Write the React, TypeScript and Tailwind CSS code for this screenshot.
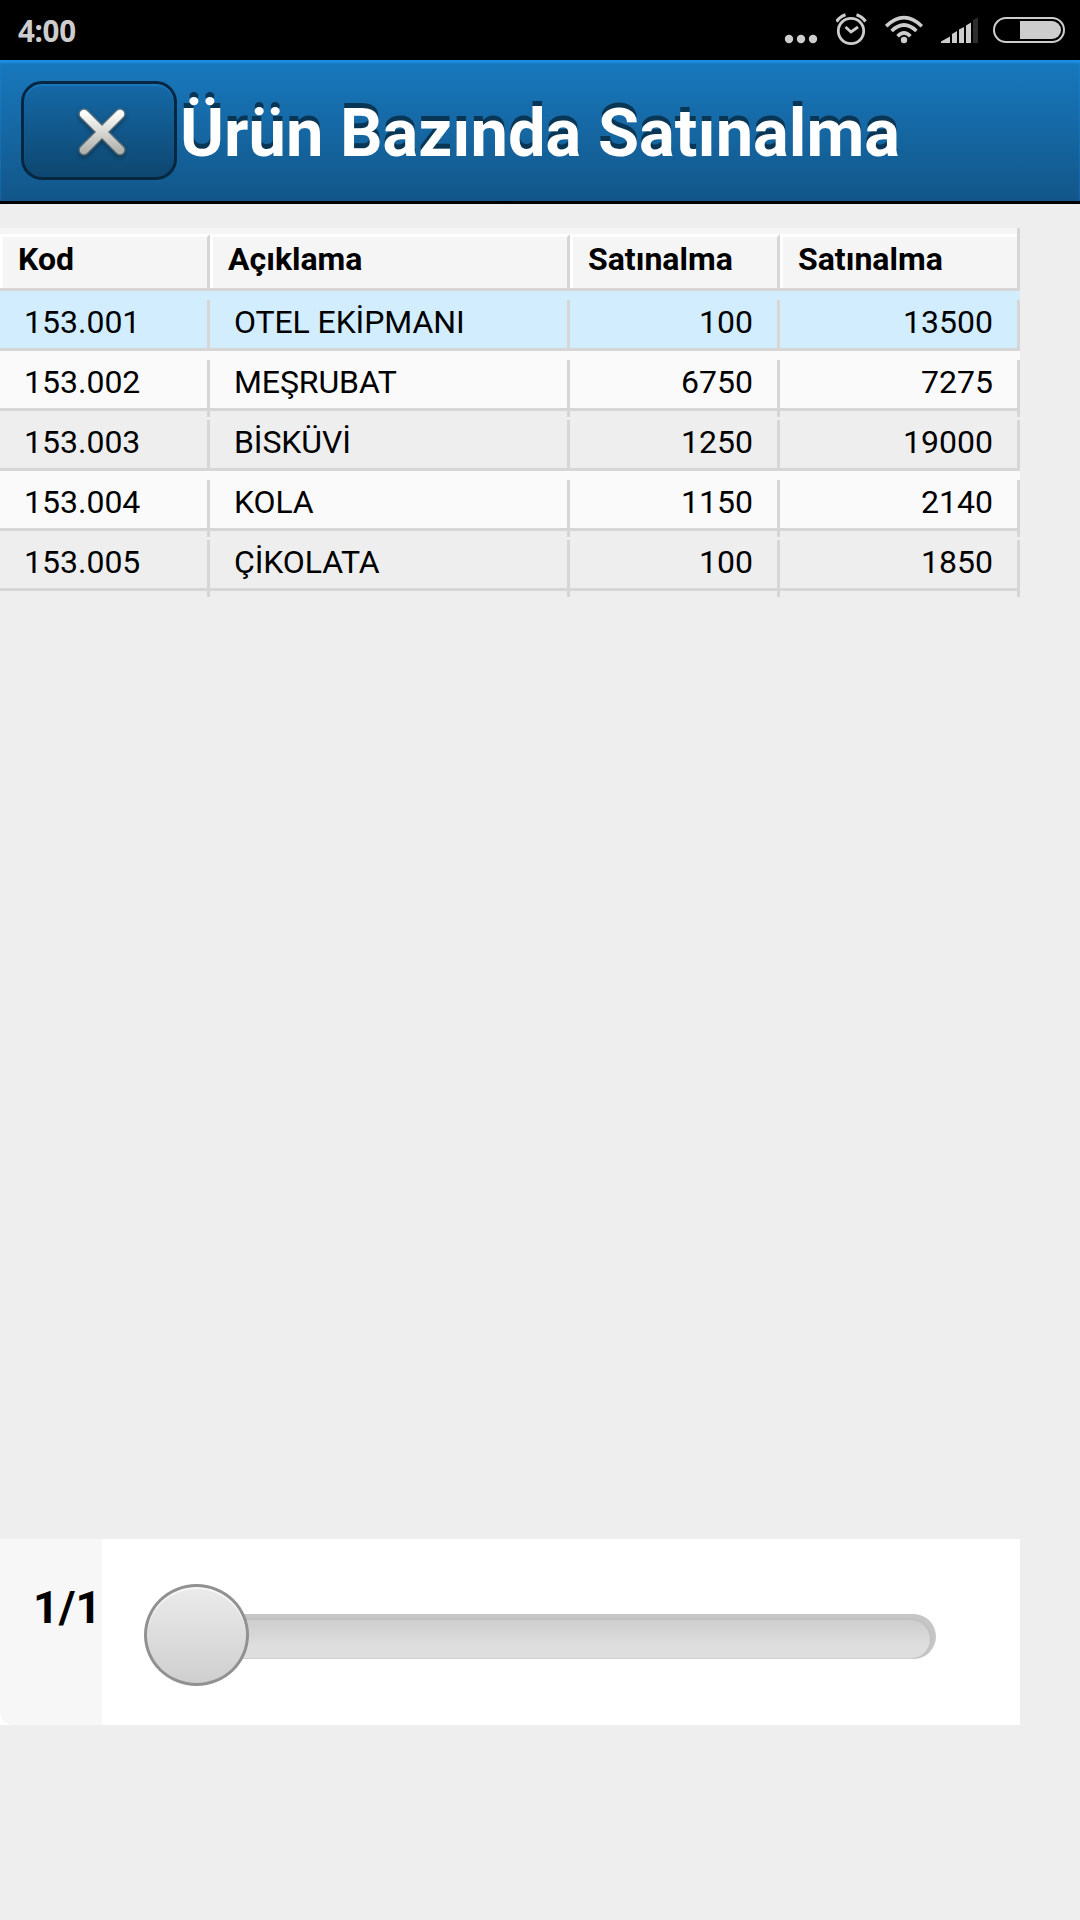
import clsx from "clsx";

type Row = {
  code: string;
  description: string;
  quantity: number;
  total: number;
};

const rows: Row[] = [
  { code: "153.001", description: "OTEL EKİPMANI", quantity: 100, total: 13500 },
  { code: "153.002", description: "MEŞRUBAT", quantity: 6750, total: 7275 },
  { code: "153.003", description: "BİSKÜVİ", quantity: 1250, total: 19000 },
  { code: "153.004", description: "KOLA", quantity: 1150, total: 2140 },
  { code: "153.005", description: "ÇİKOLATA", quantity: 100, total: 1850 },
];

const headers = ["Kod", "Açıklama", "Satınalma", "Satınalma"];

const columns = "grid grid-cols-[210px_360px_210px_240px]";

const StatusBar = () => (
  <div className="flex h-[60px] items-center justify-between bg-black pl-[18px] pr-[15px] text-[#cdcdcd]">
    <div className="pt-px font-['Noto_Sans',sans-serif] text-[29.5px] font-bold leading-none tracking-[-0.3px]">
      4:00
    </div>
    <div className="flex h-full">
      <svg className="mr-[18px]" width="34" height="60" fill="currentColor">
        <circle cx="5" cy="39" r="4.2" />
        <circle cx="17" cy="39" r="4.2" />
        <circle cx="29" cy="39" r="4.2" />
      </svg>
      <svg
        className="mr-[15px]"
        width="34"
        height="60"
        fill="none"
        stroke="currentColor"
        strokeWidth="2.8"
      >
        <circle cx="15" cy="31" r="12.7" />
        <path d="M9.5 27 15 32 22 27" />
        <path d="M.5 21.5Q4 16.5 9.5 14.8M29.5 21.5Q26 16.5 20.5 14.8" strokeWidth="3.2" />
      </svg>
      <svg
        className="mr-4"
        width="40"
        height="60"
        fill="none"
        stroke="currentColor"
        strokeWidth="3.6"
      >
        <path d="M1.2 26.2Q19 9.2 36.8 26.2M6.6 31Q19 19 31.4 31M12.6 36.2Q19 29.6 25.4 36.2" />
        <circle cx="19" cy="40" r="3.2" fill="currentColor" stroke="none" />
      </svg>
      <svg className="mr-[14px]" width="38" height="60" fill="currentColor">
        <path d="M0 43V41.5L9 36.5V43zM11 43V34L16 31V43zM18 43V29.5L23 27V43zM25 43V25.5L30 22.5V43z" />
        <path d="M32 43V20L37 17.5V43z" fill="#2d2d2d" />
      </svg>
      <svg width="72" height="60" fill="none">
        <rect
          x="1"
          y="18"
          width="70"
          height="24"
          rx="12"
          stroke="currentColor"
          strokeWidth="2"
        />
        <path d="M27 21H59A9 9 0 0 1 59 39H27z" fill="currentColor" />
      </svg>
    </div>
  </div>
);

const CloseIcon = () => (
  <svg
    className="ml-[5px] mt-[3px] drop-shadow-[0_2px_2px_rgba(0,0,0,0.4)]"
    width="52"
    height="52"
    viewBox="0 0 52 52"
  >
    <defs>
      <linearGradient id="cross" x1="0" y1="8" x2="0" y2="46" gradientUnits="userSpaceOnUse">
        <stop offset="0" stopColor="#fbfcf8" />
        <stop offset="1" stopColor="#b0b1ab" />
      </linearGradient>
    </defs>
    <path
      d="M8 8 44 44M44 8 8 44"
      stroke="#7b8380"
      strokeWidth="11.5"
      strokeLinecap="round"
      opacity=".6"
    />
    <path
      d="M8 8 44 44M44 8 8 44"
      stroke="url(#cross)"
      strokeWidth="8.5"
      strokeLinecap="round"
    />
  </svg>
);

const Header = () => (
  <header className="flex h-36 items-center border-b-[3px] border-black bg-linear-to-b from-[#1879be] to-[#125689] pl-[21px] shadow-[inset_0_3px_2px_#1c8fe2]">
    <button className="mt-[-1px] flex h-[99px] w-[156px] items-center justify-center rounded-[21px] border-[3px] border-[#06273f] bg-linear-to-b from-[#1569a7] to-[#0e4770] shadow-[inset_0_2px_1px_#1879be]">
      <CloseIcon />
    </button>
    <h1 className="ml-[3px] mt-[5px] whitespace-nowrap text-[66.8px] font-bold leading-none text-white [text-shadow:0_-5px_0_#093654]">
      Ürün Bazında Satınalma
    </h1>
  </header>
);

const TableHeader = () => (
  <div className="border-b-[3px] border-[#d6d6d6] bg-[#f5f5f5]">
    <div className="flex h-[60px] items-end border-r-[3px] border-[#d6d6d6]">
      <div className="grid h-[54px] grow grid-cols-[210px_360px_210px_1fr]">
        {headers.map((header, i) => (
          <div
            key={i}
            className={clsx(
              "border-l-[3px] border-t-[3px] border-l-white border-t-white pl-[15px] text-[32px] font-bold leading-[45px]",
              i < headers.length - 1 && "border-r-[3px] border-r-[#d6d6d6]"
            )}
          >
            {header}
          </div>
        ))}
      </div>
    </div>
  </div>
);

// short stubs of the column rules that hang below a row
const Stubs = () => (
  <div className={clsx(columns, "h-[6px]")}>
    {headers.map((_, i) => (
      <div key={i} className="border-r-[3px] border-[#d6d6d6]" />
    ))}
  </div>
);

const TableRow = ({ row, index }: { row: Row; index: number }) => {
  const cell = "border-r-[3px] border-[#d6d6d6] leading-[45px]";

  return (
    <div
      className={clsx(
        "flex h-[60px] flex-col justify-between border-b-[3px] border-[#d6d6d6]",
        index === 0 ? "bg-[#d2edfe]" : index % 2 ? "bg-[#fafafa]" : "bg-[#eeeeee]"
      )}
    >
      {index > 0 && index % 2 === 0 ? <Stubs /> : <div />}
      <div className={clsx(columns, "h-12 text-[32px]")}>
        <div className={clsx(cell, "pl-6")}>{row.code}</div>
        <div className={clsx(cell, "pl-6 tracking-[-0.1px]")}>{row.description}</div>
        <div className={clsx(cell, "pr-6 text-right")}>{row.quantity}</div>
        <div className={clsx(cell, "pr-6 text-right")}>{row.total}</div>
      </div>
    </div>
  );
};

const Pager = () => (
  <div className="flex h-[186px] w-[1020px] bg-white">
    <div className="w-[102px] rounded-bl-[14px] bg-[#f7f7f7] pl-[33px] pt-[45px] text-[45px] font-bold leading-[48px]">
      1/1
    </div>
    <div className="flex grow items-center pl-[42px]">
      <div className="relative mt-[9px] h-[45px] w-[792px]">
        <div className="ml-5 h-full overflow-hidden rounded-r-full bg-[#c6c6c6] pr-[6px] pt-[6px]">
          <div className="h-full rounded-r-full border-b border-[#d0d0d0] bg-linear-to-b from-[#cecece] to-[#dedede] to-70% shadow-[0_0_3px_#b4b4b4]" />
        </div>
        <div className="absolute left-0 top-[-30px] h-[102px] w-[105px] rounded-[50%] border-[3px] border-[#919191] bg-linear-to-b from-[#ebebeb] to-[#cfcfcf] shadow-[inset_0_2px_1px_#f8f8f8]" />
      </div>
    </div>
  </div>
);

const App = () => {
  return (
    <div className="flex h-[1920px] w-[1080px] flex-col overflow-hidden bg-[#eeeeee] font-[Roboto,sans-serif] text-black">
      <StatusBar />
      <Header />
      <main className="mt-6 h-[1311px] w-[1020px]">
        <TableHeader />
        {rows.map((row, i) => (
          <TableRow key={row.code} row={row} index={i} />
        ))}
        <Stubs />
      </main>
      <Pager />
    </div>
  );
};

export default App;
